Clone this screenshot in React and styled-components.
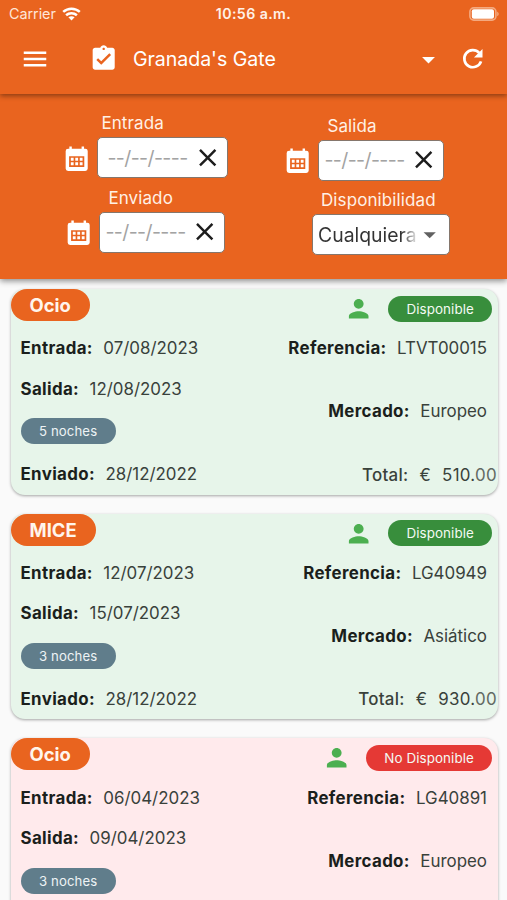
import React from 'react';
import styled, { createGlobalStyle } from 'styled-components';
import {
  MdArrowDropDown,
  MdAssignmentTurnedIn,
  MdClose,
  MdMenu,
  MdPerson
} from 'react-icons/md';

const GlobalStyle = createGlobalStyle`
  * {
    box-sizing: border-box;
  }
  body {
    margin: 0;
    background: #fafafa;
    font-family: Inter, 'Liberation Sans', sans-serif;
  }
`;

const Screen = styled.div`
  width: 507px;
  height: 900px;
  overflow: hidden;
  display: flex;
  flex-direction: column;
`;

const Header = styled.header`
  position: relative;
  z-index: 2;
  height: 94px;
  flex: none;
  background: #e9641f;
  color: #fff;
  box-shadow: 0 2px 5px rgba(0, 0, 0, 0.4);
`;

const StatusBar = styled.div`
  display: grid;
  grid-template-columns: 1fr auto 1fr;
  align-items: center;
  height: 27px;
  padding: 0 8px;
`;

const Carrier = styled.div`
  display: flex;
  align-items: center;
  gap: 6px;
  padding-left: 1px;
  font-size: 14.4px;
  letter-spacing: -0.05px;
  color: #ffe6d8;
`;

const Clock = styled.div`
  font-size: 14.2px;
  font-weight: 600;
  letter-spacing: 0.4px;
  color: #fff1e8;
`;

const Battery = styled.svg`
  justify-self: end;
`;

const Toolbar = styled.div`
  display: flex;
  align-items: center;
  height: 64px;
  padding: 0 20px;

  svg {
    flex: none;
  }
`;

const Title = styled.h1`
  flex: 1;
  margin: 0 0 0 14.5px;
  font-size: 19.6px;
  font-weight: 400;
  letter-spacing: -0.05px;
`;

const ClipboardIcon = styled(MdAssignmentTurnedIn)`
  margin-left: 39px;
`;

const Refresh = styled.svg`
  margin-left: 14px;
`;

const Filters = styled.section`
  position: relative;
  z-index: 1;
  display: grid;
  grid-template-columns: 221px 1fr;
  height: 185px;
  flex: none;
  padding: 18px 0 0 62px;
  background: #e9641f;
  box-shadow: 0 2px 6px rgba(0, 0, 0, 0.45);
`;

const FilterColumn = styled.div`
  padding-top: ${props => props.$top || 0}px;
`;

const Field = styled.div`
  display: flex;
  align-items: flex-end;
  gap: 6px;
  height: ${props => props.$height}px;
  margin-left: ${props => props.$indent || 0}px;
  color: #fff;

  > svg {
    flex: none;
    margin-bottom: 5px;
  }
`;

const FieldBody = styled.div`
  width: ${props => props.$width}px;
`;

const Label = styled.div`
  height: 25px;
  padding-left: ${props => props.$left}px;
  font-size: 17px;
  line-height: 23px;
  letter-spacing: 0.1px;
  white-space: nowrap;
  color: #fff1e6;
`;

const InputBox = styled.div`
  display: flex;
  align-items: center;
  justify-content: space-between;
  height: 41px;
  padding: 0 5px 0 ${props => props.$pad}px;
  border: 1px solid #85766c;
  border-radius: 5px;
  background: #fff;
  color: #1d1d1d;

  svg {
    flex: none;
  }
`;

const Placeholder = styled.span`
  font-size: 19.6px;
  letter-spacing: -0.6px;
  white-space: nowrap;
  color: #a3a3a3;
`;

const Selected = styled.span`
  font-size: 19.4px;
  letter-spacing: 0;
  white-space: nowrap;
  background: linear-gradient(90deg, #333 84%, rgba(51, 51, 51, 0.1) 100%);
  background-clip: text;
  color: transparent;
`;

const SelectArrow = styled(MdArrowDropDown)`
  margin-left: -2px;
`;

const List = styled.main`
  display: flex;
  flex-direction: column;
  gap: 19px;
  padding: 10px 9px 0 10.5px;
`;

const Card = styled.article`
  display: flex;
  justify-content: space-between;
  flex: none;
  height: 205.7px;
  border-radius: 14px;
  background: ${props => (props.$available ? '#e7f5ea' : '#ffeaec')};
  box-shadow: 0 1px 3px rgba(0, 0, 0, 0.35);
`;

const Side = styled.div`
  display: flex;
  flex-direction: column;
  align-items: flex-start;
`;

const RightSide = styled(Side)`
  align-items: flex-end;
  padding: 6.5px 6px 0 0;
`;

const Segment = styled.div`
  height: 32px;
  margin-bottom: 7px;
  padding: 0 19px;
  border-radius: 16px;
  background: #e9641f;
  color: #fff5ec;
  font-size: 18.4px;
  font-weight: 700;
  line-height: 32px;
`;

const Row = styled.div`
  display: flex;
  align-items: center;
  gap: 10.5px;
  height: 40.4px;
  margin: ${props => props.$margin || '0 0 0 10px'};
  font-size: 16.9px;
  letter-spacing: 0;
  white-space: nowrap;
  color: #39413b;

  b {
    font-weight: 700;
    letter-spacing: 0.35px;
    color: #1b1f1c;
  }
`;

const Total = styled(Row)`
  gap: 11px;
  letter-spacing: 0.3px;

  em {
    font-style: normal;
    color: #626963;
  }
`;

const TotalLabel = styled.span`
  font-weight: 500;
`;

const Nights = styled.div`
  height: 26px;
  margin: 9.5px 0 9.5px 10px;
  padding: 0 18.5px;
  border-radius: 13px;
  background: #607d8b;
  color: #eef3f5;
  font-size: 13.2px;
  line-height: 26px;
  letter-spacing: 0.1px;
`;

const StatusRow = styled.div`
  display: flex;
  align-items: center;
  gap: 15px;
  height: 26px;
  margin-bottom: 6.5px;
  color: #4caf50;
`;

const Pill = styled.div`
  height: 26px;
  padding: 0 18px;
  border-radius: 13px;
  background: ${props => (props.$available ? '#388e3c' : '#e53935')};
  color: #f4faf3;
  font-size: 13.4px;
  letter-spacing: 0.1px;
  line-height: 26px;
`;

const bookings = [
  {
    reference: 'LTVT00015',
    segment: 'Ocio',
    checkIn: '07/08/2023',
    checkOut: '12/08/2023',
    nights: 5,
    sent: '28/12/2022',
    market: 'Europeo',
    total: '510',
    available: true
  },
  {
    reference: 'LG40949',
    segment: 'MICE',
    checkIn: '12/07/2023',
    checkOut: '15/07/2023',
    nights: 3,
    sent: '28/12/2022',
    market: 'Asiático',
    total: '930',
    available: true
  },
  {
    reference: 'LG40891',
    segment: 'Ocio',
    checkIn: '06/04/2023',
    checkOut: '09/04/2023',
    nights: 3,
    market: 'Europeo',
    available: false
  }
];

const WifiIcon = () => (
  <svg width="19" height="14" viewBox="0 0 19 14" fill="none" stroke="#fff" strokeWidth="2.5">
    <path d="M1.2 4.9C5.9.6 13.1.6 17.8 4.9" />
    <path d="M4.1 8.2C7.1 5.5 11.9 5.5 14.9 8.2" />
    <path d="M6.4 10.3C8.1 8.9 10.9 8.9 12.6 10.3L9.5 13.5z" fill="#fff" stroke="none" />
  </svg>
);

const BatteryIcon = () => (
  <Battery width="30" height="14" viewBox="0 0 30 14">
    <rect x="0.9" y="0.9" width="26" height="12.2" rx="3.8" fill="none" stroke="#f4a97f" strokeWidth="1.6" />
    <rect x="2.8" y="2.3" width="22.2" height="9.4" rx="2" fill="#fff" />
    <path d="M28.2 4.8c2 .7 2 3.7 0 4.4z" fill="#f4a97f" />
  </Battery>
);

const CalendarIcon = () => (
  <svg width="29.4" height="29.4" viewBox="0 0 24 24" fill="#fff">
    <path
      fillRule="evenodd"
      d="M5 3.8h1V2h2v1.8h8V2h2v1.8h1a2 2 0 0 1 2 2V20a2 2 0 0 1-2 2H5a2 2 0 0 1-2-2V5.800a2 2 0 0 1 2-2zM5.800 10v8.800h12.400V10z"
    />
    <path d="M7.200 11.300h2.300v2.300H7.200zM10.850 11.300h2.300v2.300h-2.300zM14.500 11.300h2.300v2.300h-2.300zM7.200 15h2.300v2.300H7.200zM10.850 15h2.300v2.300h-2.300zM14.500 15h2.300v2.300h-2.300z" />
  </svg>
);

const RefreshIcon = () => (
  <Refresh width="29.4" height="29.4" viewBox="0 0 24 24" fill="none">
    <path d="M17.3 7.2A7 7 0 1 0 18.8 14.2" stroke="#fff" strokeWidth="2.2" />
    <path d="M20 4v7h-7z" fill="#fff" />
  </Refresh>
);

const DateField = ({ label, width, labelLeft, pad, height, indent }) => (
  <Field $height={height} $indent={indent}>
    <CalendarIcon />
    <FieldBody $width={width}>
      <Label $left={labelLeft}>{label}</Label>
      <InputBox $pad={pad}>
        <Placeholder>--/--/----</Placeholder>
        <MdClose size={29.4} />
      </InputBox>
    </FieldBody>
  </Field>
);

const Booking = ({ booking }) => (
  <Card $available={booking.available}>
    <Side>
      <Segment>{booking.segment}</Segment>
      <Row>
        <b>Entrada:</b>
        <span>{booking.checkIn}</span>
      </Row>
      <Row>
        <b>Salida:</b>
        <span>{booking.checkOut}</span>
      </Row>
      <Nights>{booking.nights} noches</Nights>
      {booking.sent && (
        <Row>
          <b>Enviado:</b>
          <span>{booking.sent}</span>
        </Row>
      )}
    </Side>
    <RightSide>
      <StatusRow>
        <MdPerson size={29.4} />
        <Pill $available={booking.available}>
          {booking.available ? 'Disponible' : 'No Disponible'}
        </Pill>
      </StatusRow>
      <Row $margin="0 5px 0 0">
        <b>Referencia:</b>
        <span>{booking.reference}</span>
      </Row>
      <Row $margin="23px 5px 0 0">
        <b>Mercado:</b>
        <span>{booking.market}</span>
      </Row>
      {booking.total && (
        <Total $margin="23.5px -5px 0 0">
          <TotalLabel>Total:</TotalLabel>
          <span>€</span>
          <span>
            {booking.total}.<em>00</em>
          </span>
        </Total>
      )}
    </RightSide>
  </Card>
);

const App = () => (
  <Screen>
    <GlobalStyle />
    <Header>
      <StatusBar>
        <Carrier>
          Carrier
          <WifiIcon />
        </Carrier>
        <Clock>10:56 a.m.</Clock>
        <BatteryIcon />
      </StatusBar>
      <Toolbar>
        <MdMenu size={30} />
        <ClipboardIcon size={29.4} />
        <Title>Granada's Gate</Title>
        <MdArrowDropDown size={31} />
        <RefreshIcon />
      </Toolbar>
    </Header>
    <Filters>
      <FilterColumn>
        <DateField label="Entrada" width={131} labelLeft={4} pad={9} height={66} />
        <DateField label="Enviado" width={126} labelLeft={9} pad={5} height={74.5} indent={2} />
      </FilterColumn>
      <FilterColumn $top={2.5}>
        <DateField label="Salida" width={126} labelLeft={9} pad={5} height={66} />
        <Field $height={74.5} $indent={29}>
          <FieldBody $width={138}>
            <Label $left={9}>Disponibilidad</Label>
            <InputBox $pad={5}>
              <Selected>Cualquiera</Selected>
              <SelectArrow size={29.4} color="#616161" />
            </InputBox>
          </FieldBody>
        </Field>
      </FilterColumn>
    </Filters>
    <List>
      {bookings.map(booking => (
        <Booking key={booking.reference} booking={booking} />
      ))}
    </List>
  </Screen>
);

export default App;
